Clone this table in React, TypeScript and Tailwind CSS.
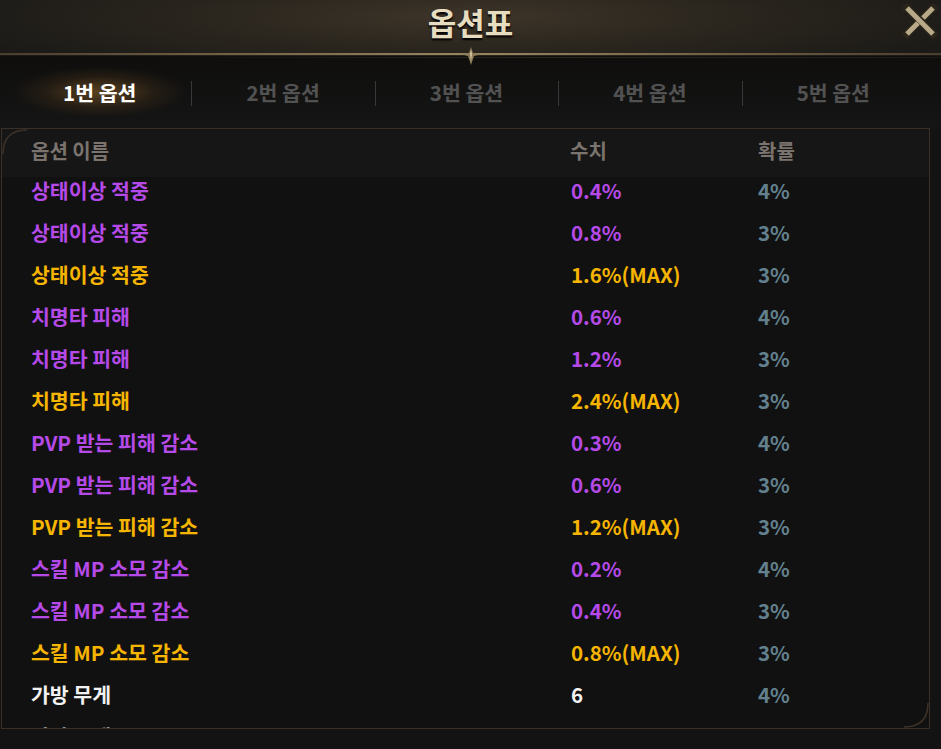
import React from 'react';

type Row = {
  name: string;
  value: string;
  rate: string;
  tone: 'purple' | 'gold' | 'white';
};

const rows: Row[] = [
  { name: '상태이상 적중', value: '0.4%', rate: '4%', tone: 'purple' },
  { name: '상태이상 적중', value: '0.8%', rate: '3%', tone: 'purple' },
  { name: '상태이상 적중', value: '1.6%(MAX)', rate: '3%', tone: 'gold' },
  { name: '치명타 피해', value: '0.6%', rate: '4%', tone: 'purple' },
  { name: '치명타 피해', value: '1.2%', rate: '3%', tone: 'purple' },
  { name: '치명타 피해', value: '2.4%(MAX)', rate: '3%', tone: 'gold' },
  { name: 'PVP 받는 피해 감소', value: '0.3%', rate: '4%', tone: 'purple' },
  { name: 'PVP 받는 피해 감소', value: '0.6%', rate: '3%', tone: 'purple' },
  { name: 'PVP 받는 피해 감소', value: '1.2%(MAX)', rate: '3%', tone: 'gold' },
  { name: '스킬 MP 소모 감소', value: '0.2%', rate: '4%', tone: 'purple' },
  { name: '스킬 MP 소모 감소', value: '0.4%', rate: '3%', tone: 'purple' },
  { name: '스킬 MP 소모 감소', value: '0.8%(MAX)', rate: '3%', tone: 'gold' },
  { name: '가방 무게', value: '6', rate: '4%', tone: 'white' },
  { name: '가방 무게', value: '12', rate: '3%', tone: 'white' },
];

const toneClass = {
  purple: 'text-[#b54ae8]',
  gold: 'text-[#f6b500]',
  white: 'text-[#f2f2f2]',
};

const tabs = ['1번 옵션', '2번 옵션', '3번 옵션', '4번 옵션', '5번 옵션'];

function CloseIcon() {
  return (
    <svg width="36" height="36" viewBox="0 0 36 36" className="absolute right-[3px] top-[3px]">
      <g stroke="#2a241a" strokeWidth="8" strokeLinecap="square">
        <line x1="5" y1="5" x2="31" y2="31" />
        <line x1="5" y1="31" x2="16" y2="20" />
        <line x1="21" y1="15" x2="31" y2="5" />
      </g>
      <g stroke="#b8aa88" strokeWidth="5" strokeLinecap="butt">
        <line x1="5" y1="5" x2="31" y2="31" />
        <line x1="5" y1="31" x2="16" y2="20" />
        <line x1="21" y1="15" x2="31" y2="5" />
      </g>
    </svg>
  );
}

function Ornament() {
  return (
    <svg width="30" height="20" viewBox="0 0 30 20" className="absolute left-1/2 top-[46px] -translate-x-1/2">
      <path d="M15 1 L17 7 L26 8 L18 10 L15 19 L12 10 L4 8 L13 7 Z" fill="#8c7a58" />
      <path d="M15 4 L16 8 L15 15 L14 8 Z" fill="#d8c9a2" />
    </svg>
  );
}

function Corner({ className }: { className: string }) {
  return (
    <svg width="26" height="26" viewBox="0 0 26 26" className={className}>
      <path d="M1 25 Q1 1 25 1" fill="none" stroke="#3e3329" strokeWidth="1.5" />
    </svg>
  );
}

export default function App() {
  return (
    <div
      className="w-[941px] h-[749px] overflow-hidden bg-[#131313] flex flex-col"
      style={{ fontFamily: '"Noto Sans CJK KR", "Noto Sans", sans-serif' }}
    >
      {/* title bar */}
      <div className="relative h-[56px] shrink-0 bg-[radial-gradient(ellipse_60%_120%_at_50%_30%,#3e3529_0%,#2b261e_45%,#1a1917_100%)]">
        <div className="text-center text-[31px] font-bold leading-[44px] text-[#e6dcc0] [text-shadow:0_2px_2px_#000]">
          옵션표
        </div>
        <div className="absolute left-0 right-0 top-[53px] h-[2px] bg-[linear-gradient(90deg,#4a3e2c,#9a8660_50%,#4a3e2c)]" />
        <div className="absolute left-[150px] right-0 top-[57px] h-[1px] bg-[linear-gradient(90deg,transparent,#2b251c_50%,#1d1a16)]" />
        <Ornament />
        <CloseIcon />
      </div>

      {/* tabs */}
      <div className="h-[72px] shrink-0 flex items-center pl-[8px] pr-[16px] bg-[linear-gradient(180deg,#0f0e0d,#151515)]">
        {tabs.map((t, i) => (
          <div key={t} className="relative flex-1 flex items-center justify-center h-full">
            {i > 0 && <div className="absolute left-0 top-[25px] h-[25px] w-[1px] bg-[#383838]" />}
            {i === 0 && (
              <div className="absolute left-1/2 top-1/2 h-[50px] w-[170px] -translate-x-1/2 -translate-y-1/2 bg-[radial-gradient(ellipse_at_center,rgba(150,105,45,0.55)_0%,rgba(90,62,28,0.25)_45%,transparent_72%)]" />
            )}
            <span
              className={
                'relative text-[20.5px] font-bold ' + (i === 0 ? 'text-white' : 'text-[#525252]')
              }
            >
              {t}
            </span>
          </div>
        ))}
      </div>

      {/* table panel */}
      <div className="relative ml-[1px] w-[929px] h-[601px] shrink-0 border border-[#3a3027] bg-[#111111] overflow-hidden">
        <Corner className="absolute left-0 top-0 z-20" />
        <Corner className="absolute right-0 bottom-0 z-20 rotate-180" />
        <div className="relative z-10 h-[48px] grid grid-cols-[568px_188px_1fr] items-center bg-[#161616] pb-[4px] text-[20px] font-bold text-[#7b736d]">
          <div className="pl-[29px]">옵션 이름</div>
          <div>수치</div>
          <div>확률</div>
        </div>
        <div className="-mt-[8px]">
          {rows.map((r, i) => (
            <div
              key={i}
              className="h-[42px] grid grid-cols-[568px_188px_1fr] items-center text-[20.5px] font-bold"
            >
              <div className={'pl-[29px] ' + toneClass[r.tone]}>{r.name}</div>
              <div className={'pl-[1px] ' + toneClass[r.tone]}>{r.value}</div>
              <div className="text-[#62808e]">{r.rate}</div>
            </div>
          ))}
        </div>
      </div>
    </div>
  );
}
